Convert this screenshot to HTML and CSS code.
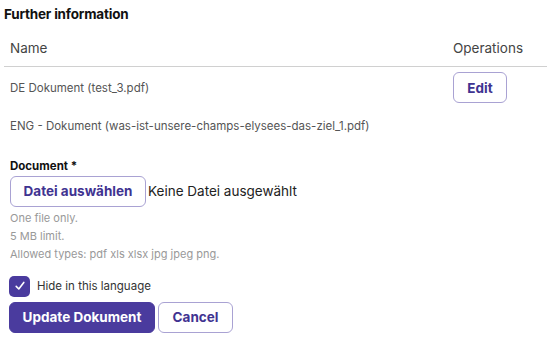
FILE: index.html
```html
<!DOCTYPE html>
<html>
<head>
<meta charset="utf-8">
<link rel="stylesheet" href="styles.css">
</head>
<body>
<div class="page">
  <h2 class="title">Further information</h2>
  <table class="docs">
    <thead>
      <tr><th class="c-name">Name</th><th class="c-ops">Operations</th></tr>
    </thead>
    <tbody>
      <tr class="row-de"><td>DE Dokument (test_3.pdf)</td><td class="c-ops"><button class="btn btn-outline btn-edit">Edit</button></td></tr>
      <tr class="row-en"><td>ENG - Dokument (was-ist-unsere-champs-elysees-das-ziel_1.pdf)</td><td></td></tr>
    </tbody>
  </table>
  <div class="field">
    <div class="label">Document *</div>
    <div class="file-row">
      <button class="btn btn-outline btn-file">Datei auswählen</button>
      <span class="file-none">Keine Datei ausgewählt</span>
    </div>
    <div class="help">
      <div>One file only.</div>
      <div>5 MB limit.</div>
      <div>Allowed types: pdf xls xlsx jpg jpeg png.</div>
    </div>
  </div>
  <label class="check">
    <span class="box"><svg width="12" height="12" viewBox="0 0 12 12"><path d="M2.2 6.4 L4.8 9 L9.8 2.4" fill="none" stroke="#fff" stroke-width="1.6" stroke-linecap="round" stroke-linejoin="round"/></svg></span>
    <span class="check-label">Hide in this language</span>
  </label>
  <div class="actions">
    <button class="btn btn-primary">Update Dokument</button>
    <button class="btn btn-outline btn-cancel">Cancel</button>
  </div>
</div>
</body>
</html>
```

FILE: styles.css
```css
* { box-sizing: border-box; }
html, body { margin: 0; padding: 0; background: #fff; }
body { font-family: Inter, "Noto Sans", sans-serif; color: #333; }
.page { padding: 5px 6px 0 4px; width: 552px; }
.title { margin: 0; font-size: 13.5px; font-weight: 700; color: #111; line-height: 18px; letter-spacing: -0.2px; }
.docs { width: 543px; border-collapse: collapse; margin-top: 13px; }
.docs th { font-weight: 400; font-size: 13.5px; color: #444; text-align: left; padding: 3px 6px 9px 6px; border-bottom: 1.5px solid #d0d0d0; line-height: 18px; }
.docs th.c-ops { text-align: left; width: 100px; padding-left: 6px; }
.docs td { font-size: 11.5px; color: #555; padding: 0 6px; line-height: 16px; }
.row-de td { height: 41px; padding-top: 1px; }
.row-en td { height: 30px; vertical-align: top; padding-top: 10px; }
.btn { font-family: inherit; font-weight: 700; font-size: 13.5px; border-radius: 6px; cursor: pointer; line-height: 18px; white-space: nowrap; }
.btn-outline { background: #fff; border: 1px solid #a9a2d3; color: #3f3391; }
.btn-edit { height: 31px; width: 54px; padding: 0; }
.field { margin-top: 21px; padding-left: 6px; }
.label { font-size: 11.5px; font-weight: 700; color: #111; line-height: 14px; }
.file-row { display: flex; align-items: center; margin-top: 3px; }
.btn-file { height: 31px; padding: 0; width: 136px; }
.file-none { font-size: 13.5px; color: #222; margin-left: 2px; }
.help { margin-top: 2px; font-size: 11px; color: #999; line-height: 18px; }
.check { display: flex; align-items: center; margin-top: 13px; padding-left: 5px; }
.box { width: 21px; height: 21px; border-radius: 5px; background: #4a3b9e; display: flex; align-items: center; justify-content: center; }
.check-label { font-size: 11.5px; color: #333; margin-left: 7px; }
.actions { display: flex; gap: 3px; margin-top: 5px; padding-left: 5px; }
.btn-primary { background: #4a3b9e; color: #fff; border: 1px solid #4a3b9e; height: 31px; width: 146px; padding: 0; }
.btn-cancel { height: 31px; width: 75px; padding: 0; }
```
